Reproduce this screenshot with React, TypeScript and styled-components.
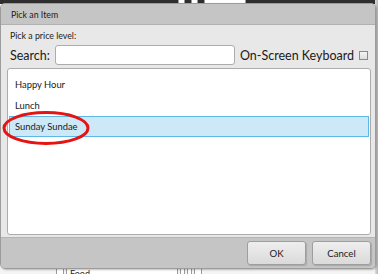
import React from "react";
import styled, { createGlobalStyle } from "styled-components";

const GlobalStyle = createGlobalStyle`
  html, body {
    margin: 0;
    padding: 0;
    background: #ffffff;
  }
  body {
    font-family: Lato, "Noto Sans", sans-serif;
  }
`;

// ===== page behind the dialog =====

const Screen = styled.div`
  position: relative;
  width: 378px;
  height: 274px;
  overflow: hidden;
  background: #f4f4f4;
  display: flex;
  flex-direction: column;
  justify-content: space-between;
`;

const BackTop = styled.div`
  height: 4px;
  background: #2e2e2e;
  display: flex;
  gap: 6px;
  padding-left: 178px;
`;

const BackCell = styled.div<{ $w: number }>`
  width: ${(p) => p.$w}px;
  height: 3px;
  border: 1px solid #9a9a9a;
  border-top: none;
  background: #ffffff;
`;

const BackBottom = styled.div`
  height: 6px;
  display: flex;
  align-items: flex-end;
  padding-left: 56px;
  gap: 2px;
  font-size: 9px;
  line-height: 9px;
  color: #222;
`;

const BackBox = styled.div<{ $w: number }>`
  width: ${(p) => p.$w}px;
  height: 6px;
  border: 1px solid #9a9a9a;
  border-bottom: none;
  background: #ffffff;
  box-sizing: border-box;
  padding-left: 3px;
  overflow: hidden;
`;

const RightBar = styled.div`
  position: absolute;
  top: 0;
  right: 0;
  width: 3px;
  height: 274px;
  background: linear-gradient(to right, #dcdcdc, #b8b8b8);
`;

// ===== dialog =====

const Dialog = styled.div`
  position: absolute;
  left: 0;
  top: 3px;
  width: 376px;
  height: 266px;
  box-sizing: border-box;
  border: 1px solid #9c9c9c;
  border-radius: 5px;
  overflow: hidden;
  background: #e8e8e8;
  display: flex;
  flex-direction: column;
  box-shadow: 1px 1px 2px rgba(0, 0, 0, 0.25);
`;

const TitleBar = styled.div`
  height: 20px;
  flex: none;
  background: #c5c5c5;
  border-bottom: 1px solid #b0b0b0;
  padding-left: 10px;
  display: flex;
  align-items: center;
  font-size: 8.8px;
  color: #1a1a1a;
`;

const Body = styled.div`
  flex: 1;
  display: flex;
  flex-direction: column;
  padding: 4px 4px 2px 6px;
  min-height: 0;
`;

const Prompt = styled.div`
  font-size: 8.8px;
  color: #1a1a1a;
  padding-left: 3px;
  height: 14px;
  line-height: 14px;
`;

const SearchRow = styled.div`
  display: flex;
  align-items: center;
  height: 22px;
  margin-top: 1px;
  padding-left: 3px;
  white-space: nowrap;
`;

const Label = styled.span`
  font-size: 12.5px;
  color: #1a1a1a;
  flex: none;
`;

const SearchInput = styled.input`
  width: 180px;
  height: 20px;
  flex: none;
  box-sizing: border-box;
  margin: 0 5px 0 5px;
  border: 1px solid #acacac;
  border-radius: 3px;
  background: #ffffff;
  outline: none;
`;

const CheckBox = styled.span`
  width: 7px;
  height: 7px;
  flex: none;
  margin-left: 5px;
  border: 1px solid #8a8a8a;
  background: linear-gradient(#f4f4f4, #dedede);
`;

const ListBox = styled.div`
  flex: 1;
  margin-top: 2px;
  background: #ffffff;
  border: 1px solid #acacac;
  border-radius: 3px;
  padding: 5px 1px 4px;
  display: flex;
  flex-direction: column;
`;

const Item = styled.div<{ $selected?: boolean }>`
  height: 21px;
  box-sizing: border-box;
  display: flex;
  align-items: center;
  padding-left: 5px;
  font-size: 9.4px;
  color: #1a1a1a;
  background: ${(p) => (p.$selected ? "#cde8f7" : "transparent")};
  border: 1px solid ${(p) => (p.$selected ? "#5db8e8" : "transparent")};
`;

const Footer = styled.div`
  height: 30px;
  flex: none;
  background: #c5c5c5;
  border-top: 1px solid #b4b4b4;
  display: flex;
  justify-content: flex-end;
  align-items: center;
  gap: 6px;
  padding-right: 4px;
`;

const Button = styled.button`
  width: 59px;
  height: 24px;
  border: 1px solid #9e9e9e;
  border-radius: 3px;
  background: linear-gradient(#eeeeee, #dadada);
  font-family: Lato, "Noto Sans", sans-serif;
  font-size: 9.6px;
  color: #1a1a1a;
  padding: 0;
  box-shadow: 1px 1px 1px rgba(0, 0, 0, 0.15);
`;

const Highlight = styled.svg`
  position: absolute;
  left: 2px;
  top: 110px;
  pointer-events: none;
`;

export default function App() {
  return (
    <>
      <GlobalStyle />
      <Screen>
        <BackTop>
          <BackCell $w={5} />
          <BackCell $w={5} />
          <BackCell $w={40} />
        </BackTop>
        <BackBottom>
          <BackBox $w={8} />
          <BackBox $w={112}>Food</BackBox>
          <BackBox $w={5} />
          <BackBox $w={5} />
          <BackBox $w={8} />
        </BackBottom>
        <RightBar />
        <Dialog>
          <TitleBar>Pick an Item</TitleBar>
          <Body>
            <Prompt>Pick a price level:</Prompt>
            <SearchRow>
              <Label>Search:</Label>
              <SearchInput />
              <Label>On-Screen Keyboard</Label>
              <CheckBox />
            </SearchRow>
            <ListBox>
              <Item>Happy Hour</Item>
              <Item>Lunch</Item>
              <Item $selected>Sunday Sundae</Item>
            </ListBox>
          </Body>
          <Footer>
            <Button>OK</Button>
            <Button>Cancel</Button>
          </Footer>
        </Dialog>
        <Highlight width="90" height="36" viewBox="0 0 90 36">
          <ellipse
            cx="44"
            cy="18"
            rx="42"
            ry="15.5"
            fill="none"
            stroke="#e41414"
            strokeWidth="3"
          />
        </Highlight>
      </Screen>
    </>
  );
}
